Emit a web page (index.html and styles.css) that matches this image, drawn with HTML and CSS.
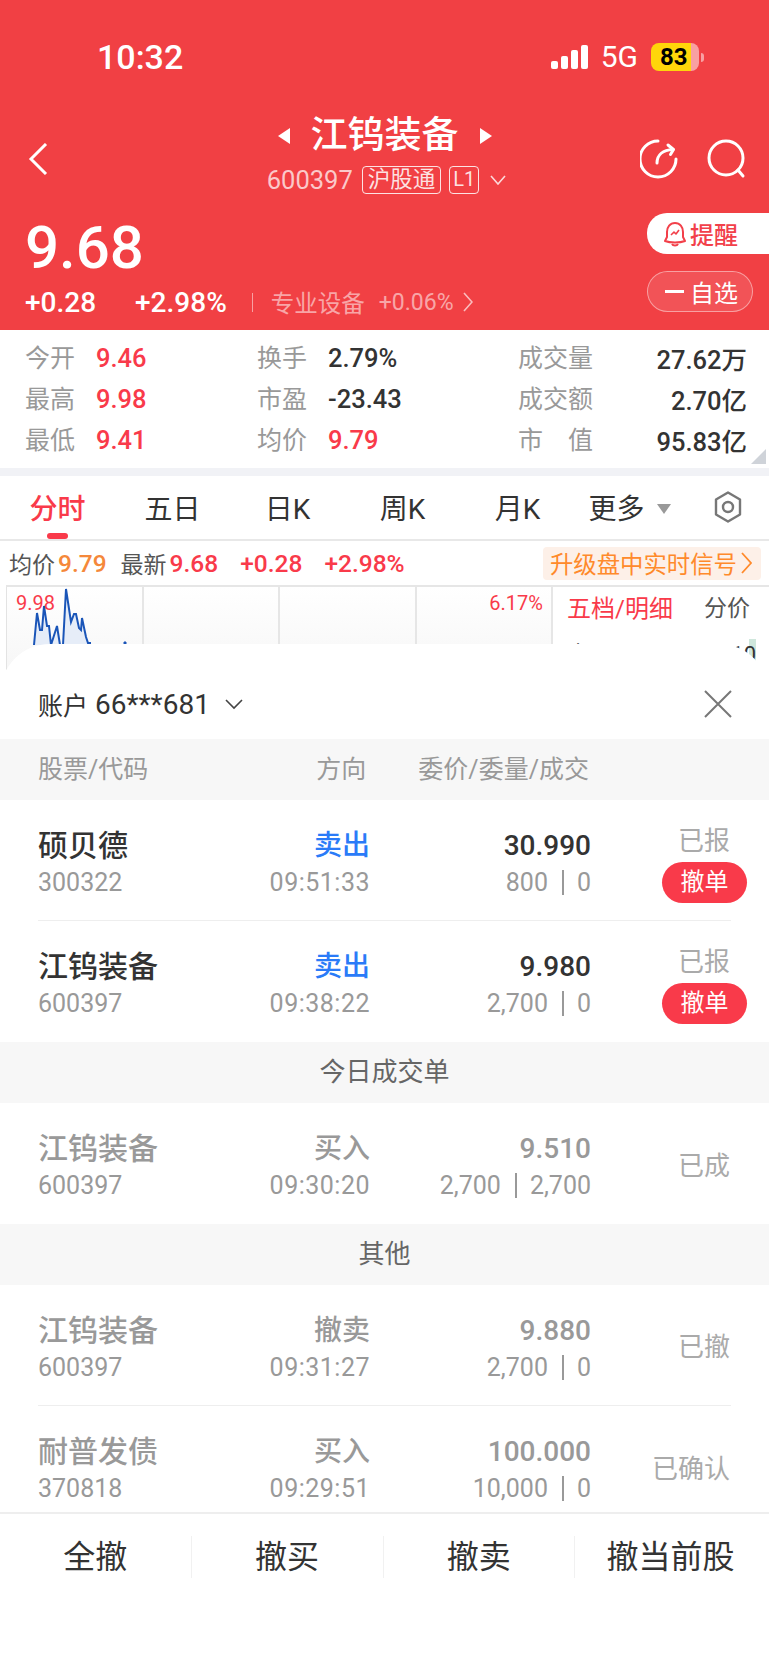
FILE: index.html
```html
<!DOCTYPE html>
<html lang="zh-CN">
<head>
  <meta charset="UTF-8" />
  <meta name="viewport" content="width=device-width, initial-scale=1.0" />
  <title>江钨装备</title>
  <link rel="stylesheet" href="styles.css">
</head>
<body>
  <div class="app">
    <header class="header">
      <div class="status-bar">
        <span class="clock">10:32</span>
        <div class="status-right">
          <div class="signal"><i></i><i></i><i></i><i></i></div>
          <span class="net">5G</span>
          <div class="battery"><span>83</span></div>
          <i class="battery-cap"></i>
        </div>
      </div>

      <div class="nav">
        <svg class="back" width="20" height="32" viewBox="0 0 20 32"><path d="M18 1 3 16l15 15" fill="none" stroke="#fff" stroke-width="3"/></svg>
        <div class="nav-center">
          <div class="title-line">
            <i class="arrow-left"></i>
            <span class="title">江钨装备</span>
            <i class="arrow-right"></i>
          </div>
          <div class="code-line">
            <span class="code">600397</span>
            <span class="tag">沪股通</span>
            <span class="tag tag-l1">L1</span>
            <svg width="16" height="10" viewBox="0 0 16 10"><path d="M1 1l7 8 7-8" fill="none" stroke="#fff" stroke-opacity=".8" stroke-width="1.6"/></svg>
          </div>
        </div>
        <div class="nav-icons">
          <svg width="40" height="40" viewBox="0 0 40 40" fill="none" stroke="#fff" stroke-width="3" stroke-linecap="round" stroke-linejoin="round">
            <path d="M18 2A18 18 0 1 0 36 20"/>
            <path d="M17 24c0-8 6-13 16-13.500"/>
            <path d="M28 6l5.500 4.500-3 5"/>
          </svg>
          <svg width="40" height="40" viewBox="0 0 40 40" fill="none" stroke="#fff" stroke-width="3" stroke-linecap="round">
            <circle cx="19" cy="19" r="17"/>
            <path d="M31 31l5 6"/>
          </svg>
        </div>
      </div>

      <div class="price-row">
        <div class="price-left">
          <div class="price">9.68</div>
          <div class="change-line">
            <span class="chg">+0.28</span>
            <span class="chg-pct">+2.98%</span>
            <i class="sep"></i>
            <span class="sector">专业设备</span>
            <span class="sector-pct">+0.06%</span>
            <svg width="10" height="20" viewBox="0 0 10 20"><path d="M1 1l8 9-8 9" fill="none" stroke="#fff" stroke-opacity=".65" stroke-width="1.6"/></svg>
          </div>
        </div>
        <div class="price-actions">
          <div class="remind">
            <svg width="24" height="26" viewBox="0 0 24 26" fill="none" stroke="#f2404a" stroke-width="2" stroke-linejoin="round">
              <path d="M12 2c-5 0-8 4-8 9v5l-2 4c5 2 15 2 20 0l-2-4v-5c0-5-3-9-8-9z"/>
              <path d="M8 14l3-3 2 2 3-4" stroke-width="1.600"/>
              <path d="M9 23c1 2 5 2 6 0"/>
            </svg>
            <span>提醒</span>
          </div>
          <div class="watch"><i></i><span>自选</span></div>
        </div>
      </div>
    </header>

    <section class="stats">
      <div class="stat"><span class="stat-label">今开</span><span class="up">9.46</span></div>
      <div class="stat"><span class="stat-label">换手</span><span>2.79%</span></div>
      <div class="stat stat-wide"><span class="stat-label">成交量</span><span>27.62万</span></div>
      <div class="stat"><span class="stat-label">最高</span><span class="up">9.98</span></div>
      <div class="stat"><span class="stat-label">市盈</span><span>-23.43</span></div>
      <div class="stat stat-wide"><span class="stat-label">成交额</span><span>2.70亿</span></div>
      <div class="stat"><span class="stat-label">最低</span><span class="up">9.41</span></div>
      <div class="stat"><span class="stat-label">均价</span><span class="up">9.79</span></div>
      <div class="stat stat-wide"><span class="stat-label stat-spread"><b>市</b><b>值</b></span><span>95.83亿</span></div>
      <i class="corner"></i>
    </section>

    <nav class="tabs">
      <a class="tab active">分时</a>
      <a class="tab">五日</a>
      <a class="tab">日K</a>
      <a class="tab">周K</a>
      <a class="tab">月K</a>
      <a class="tab tab-more">更多<i></i></a>
      <svg class="tab-gear" width="30" height="32" viewBox="0 0 30 32" fill="none" stroke="#777" stroke-width="2.400" stroke-linejoin="round">
        <path d="M15 1.500l12 7v15l-12 7-12-7v-15z"/>
        <circle cx="15" cy="16" r="5"/>
      </svg>
    </nav>

    <div class="quote-line">
      <span class="muted">均价</span><span class="avg">9.79</span>
      <span class="muted latest">最新</span><span class="up">9.68</span>
      <span class="up gap-a">+0.28</span>
      <span class="up gap-b">+2.98%</span>
      <span class="signal-link">升级盘中实时信号
        <svg width="11" height="22" viewBox="0 0 11 22"><path d="M1 1l9 10-9 10" fill="none" stroke="#ff8a2b" stroke-width="1.800"/></svg>
      </span>
    </div>

    <div class="chart">
      <div class="plot">
        <div class="plot-cell">
          <span class="plot-high">9.98</span>
          <svg class="plot-line" width="137" height="60" viewBox="0 0 137 60">
            <path d="M27 60 30 28 33 45 35 45 37 21 40 41 42 41 44 60 50 41 53 60 56 60 59 4 64 37 67 29 69 29 72 43 74 45 75 33 79 52 81 58 84 58 84 60z" fill="#e6edf8"/>
            <path d="M27 60 30 28 33 45 35 45 37 21 40 41 42 41 44 60 50 41 53 60 56 60 59 4 64 37 67 29 69 29 72 43 74 45 75 33 79 52 81 58 84 58" fill="none" stroke="#1a55b8" stroke-width="2"/>
            <path d="M118 60 116 58 118 56 120 58z" fill="#1a55b8"/>
          </svg>
        </div>
        <div class="plot-cell"></div>
        <div class="plot-cell"></div>
        <div class="plot-cell plot-last"><span class="plot-pct">6.17%</span></div>
      </div>
      <div class="depth">
        <div class="depth-head"><span class="up">五档/明细</span><span class="depth-alt">分价</span></div>
        <i class="depth-bar"></i>
        <div class="depth-row"><span>卖5</span><span>10</span></div>
      </div>
    </div>

    <!-- orders sheet, slides over the chart -->
    <div class="sheet">
      <div class="sheet-top">
        <div class="account"><span>账户</span><span class="account-no">66***681</span>
          <svg width="18" height="11" viewBox="0 0 18 11"><path d="M1 1l8 8 8-8" fill="none" stroke="#444" stroke-width="1.600"/></svg>
        </div>
        <svg width="30" height="30" viewBox="0 0 30 30"><path d="M2 2l26 26M28 2 2 28" fill="none" stroke="#777" stroke-width="2"/></svg>
      </div>

      <div class="band band-head">
        <span>股票/代码</span>
        <span class="band-dir">方向</span>
        <span class="band-price">委价/委量/成交</span>
      </div>

      <div class="orders">
        <div class="row">
          <div><div class="name">硕贝德</div><div class="sub">300322</div></div>
          <div class="right"><div class="dir sell">卖出</div><div class="sub time">09:51:33</div></div>
          <div class="right"><div class="deal">30.990</div><div class="sub">800<i class="bar"></i>0</div></div>
          <div class="state state-open"><span>已报</span><a class="cancel">撤单</a></div>
        </div>
        <div class="row row-last">
          <div><div class="name">江钨装备</div><div class="sub">600397</div></div>
          <div class="right"><div class="dir sell">卖出</div><div class="sub time">09:38:22</div></div>
          <div class="right"><div class="deal">9.980</div><div class="sub">2,700<i class="bar"></i>0</div></div>
          <div class="state state-open"><span>已报</span><a class="cancel">撤单</a></div>
        </div>

        <div class="band band-title">今日成交单</div>

        <div class="row row-last row-done">
          <div><div class="name">江钨装备</div><div class="sub">600397</div></div>
          <div class="right"><div class="dir">买入</div><div class="sub time">09:30:20</div></div>
          <div class="right"><div class="deal">9.510</div><div class="sub">2,700<i class="bar"></i>2,700</div></div>
          <div class="state"><span>已成</span></div>
        </div>

        <div class="band band-title">其他</div>

        <div class="row row-done">
          <div><div class="name">江钨装备</div><div class="sub">600397</div></div>
          <div class="right"><div class="dir">撤卖</div><div class="sub time">09:31:27</div></div>
          <div class="right"><div class="deal">9.880</div><div class="sub">2,700<i class="bar"></i>0</div></div>
          <div class="state"><span>已撤</span></div>
        </div>
        <div class="row row-last row-done">
          <div><div class="name">耐普发债</div><div class="sub">370818</div></div>
          <div class="right"><div class="dir">买入</div><div class="sub time">09:29:51</div></div>
          <div class="right"><div class="deal">100.000</div><div class="sub">10,000<i class="bar"></i>0</div></div>
          <div class="state"><span>已确认</span></div>
        </div>
      </div>

      <div class="actions">
        <a>全撤</a>
        <a>撤买</a>
        <a>撤卖</a>
        <a>撤当前股</a>
      </div>
    </div>
  </div>
</body>
</html>
```

FILE: styles.css
```css
:root {
  --red: #f14044;
  --up: #f93a4a;
  --blue: #2a7bf8;
  --gray: #999;
  --band: #f7f7f7;
  --line: #eeeeee;
}

* {
  box-sizing: border-box;
}

body {
  margin: 0;
  background: #fff;
  font-family: Roboto, "Noto Sans CJK SC", sans-serif;
  color: #333;
}

i {
  display: block;
  font-style: normal;
}

.app {
  position: relative;
  width: 769px;
  height: 1665px;
  overflow: hidden;
}

.up { color: var(--up); }

/* red quote header */
.header {
  height: 330px;
  background: var(--red);
  color: #fff;
}

.status-bar {
  display: flex;
  justify-content: space-between;
  align-items: center;
  height: 114px;
  padding: 0 65px 0 97px;
}

.clock {
  font-size: 34px;
  font-weight: 500;
  line-height: 36px;
}

.status-right {
  display: flex;
  align-items: center;
}

.signal {
  display: flex;
  align-items: flex-end;
  gap: 3px;
  height: 24px;
  margin-right: 13px;
}

.signal i {
  width: 7px;
  border-radius: 2px;
  background: #fff;
}
.signal i:nth-child(1) { height: 8px; }
.signal i:nth-child(2) { height: 13px; }
.signal i:nth-child(3) { height: 19px; }
.signal i:nth-child(4) { height: 24px; }

.net {
  font-size: 30px;
  line-height: 30px;
  margin-right: 13px;
}

.battery {
  width: 48px;
  height: 28px;
  border-radius: 8px;
  background: linear-gradient(90deg, #ffd60a 83%, #f8a0a2 83%);
  color: #000;
  font-size: 24px;
  font-weight: 700;
  line-height: 28px;
  padding-left: 9px;
}

.battery-cap {
  width: 3px;
  height: 9px;
  margin-left: 2px;
  border-radius: 0 3px 3px 0;
  background: #f8a0a2;
}

.nav {
  position: relative;
  display: flex;
  justify-content: center;
  height: 90px;
}

.back {
  position: absolute;
  left: 28px;
  top: 29px;
}

.nav-icons {
  position: absolute;
  right: 22px;
  top: 25px;
  display: flex;
  gap: 27px;
}

.nav-center {
  display: flex;
  flex-direction: column;
  align-items: center;
}

.title-line {
  display: flex;
  align-items: center;
  gap: 21px;
  height: 44px;
}

.title {
  font-size: 37px;
  font-weight: 500;
  line-height: 44px;
}

.arrow-left,
.arrow-right {
  width: 0;
  height: 0;
  border-top: 8px solid transparent;
  border-bottom: 8px solid transparent;
}
.arrow-left { border-right: 12px solid #fff; }
.arrow-right { border-left: 12px solid #fff; }

.code-line {
  display: flex;
  align-items: center;
  gap: 8px;
  margin-top: 7px;
  padding-left: 4px;
  height: 30px;
}

.code {
  font-size: 25.500px;
  color: rgba(255, 255, 255, 0.72);
  margin-right: 1px;
}

.tag {
  height: 28px;
  padding: 0 5px;
  border: 1px solid rgba(255, 255, 255, 0.85);
  border-radius: 4px;
  font-size: 22.500px;
  line-height: 25px;
  color: rgba(255, 255, 255, 0.85);
}

.tag-l1 {
  padding: 0 3px;
  font-size: 20px;
  margin-right: 3px;
}

.price-row {
  display: flex;
  justify-content: space-between;
  padding: 9px 16px 0 25px;
}

.price {
  font-size: 60px;
  font-weight: 500;
  line-height: 70px;
  letter-spacing: 0;
}

.change-line {
  display: flex;
  align-items: center;
  height: 36px;
  margin-top: 1px;
}

.chg,
.chg-pct {
  font-size: 28px;
  font-weight: 500;
}

.chg-pct {
  margin-left: 39px;
}

.sep {
  width: 1px;
  height: 19px;
  margin: 0 18px 0 25px;
  background: rgba(255, 255, 255, 0.5);
}

.sector {
  font-size: 23.500px;
  color: rgba(255, 255, 255, 0.55);
}

.sector-pct {
  margin: 0 9px 0 14px;
  font-size: 23px;
  color: rgba(255, 255, 255, 0.55);
}

.price-actions {
  display: flex;
  flex-direction: column;
  gap: 17px;
}

.remind {
  display: flex;
  align-items: center;
  gap: 3px;
  width: 122px;
  height: 41px;
  margin-right: -16px;
  padding-left: 16px;
  border-radius: 20px 0 0 20px;
  background: #fff;
  color: #f2404a;
  font-size: 24px;
  font-weight: 500;
}

.watch {
  display: flex;
  align-items: center;
  gap: 6px;
  width: 106px;
  height: 41px;
  padding-left: 17px;
  border: 1px solid rgba(255, 255, 255, 0.45);
  border-radius: 21px;
  background: rgba(255, 255, 255, 0.1);
  font-size: 24px;
}

.watch i {
  width: 19px;
  height: 3px;
  background: #fff;
}

/* open, high, low and friends */
.stats {
  position: relative;
  display: grid;
  grid-template-columns: 232px 261px 1fr;
  grid-auto-rows: 41px;
  height: 146px;
  padding: 7px 22px 0 25px;
  border-bottom: 8px solid #f1f2f6;
  font-size: 25.500px;
  font-weight: 500;
}

.stat {
  display: flex;
  align-items: center;
}

.stat-label {
  flex: none;
  width: 71px;
  margin-bottom: 3px;
  font-weight: 400;
  font-size: 25px;
  color: var(--gray);
  white-space: nowrap;
}

.stat-wide {
  justify-content: space-between;
}

.stat-spread {
  display: flex;
  justify-content: space-between;
  width: 75px;
}

.stat-spread b {
  font-weight: 400;
}

.corner {
  position: absolute;
  right: 3px;
  bottom: 4px;
  width: 0;
  height: 0;
  border-left: 15px solid transparent;
  border-bottom: 15px solid #cfd3d9;
}

/* period tabs */
.tabs {
  position: relative;
  display: flex;
  height: 65px;
  border-bottom: 2px solid #e8e8e8;
}

.tab {
  position: relative;
  display: flex;
  align-items: center;
  justify-content: center;
  width: 115px;
  height: 62px;
  font-size: 28px;
  color: #333;
}

.tab.active {
  color: var(--up);
  font-weight: 500;
}

.tab.active::after {
  content: "";
  position: absolute;
  left: 47px;
  bottom: -1px;
  width: 21px;
  height: 6px;
  border-radius: 3px;
  background: var(--up);
}

.tab-more {
  padding-right: 6px;
}

.tab-more i {
  width: 0;
  height: 0;
  margin: 3px 0 0 12px;
  border-left: 7px solid transparent;
  border-right: 7px solid transparent;
  border-top: 10px solid #999;
}

.tab-gear {
  margin: 15px 0 0 23px;
}

.quote-line {
  display: flex;
  align-items: center;
  height: 44px;
  padding: 0 8px 0 9px;
  font-size: 24.500px;
  font-weight: 500;
}

.muted {
  margin-right: 3px;
  font-size: 23px;
  font-weight: 400;
  color: #555;
}

.avg { color: #f5883a; }
.latest { margin-left: 14px; }
.gap-a { margin-left: 22px; }
.gap-b { margin-left: 22px; }

.signal-link {
  display: flex;
  align-items: center;
  gap: 4px;
  margin-left: auto;
  height: 33px;
  padding: 0 9px 0 7px;
  border-radius: 4px;
  background: #fdf0e8;
  color: #ff8a2b;
  font-size: 23.400px;
  font-weight: 400;
}

/* intraday chart, mostly under the sheet */
.chart {
  display: flex;
  height: 120px;
  margin-left: 6px;
  border-top: 2px solid #e6e6e6;
  background: linear-gradient(#fff, #f3f3f3);
}

.plot {
  display: flex;
  width: 547px;
  border-left: 1px solid #e3e3e3;
}

.plot-cell {
  position: relative;
  flex: 1;
  border-right: 2px solid #e6e6e6;
}

.plot-high,
.plot-pct {
  position: absolute;
  top: 4px;
  font-size: 20px;
  line-height: 24px;
  color: var(--up);
  z-index: 1;
}

.plot-high { left: 9px; }
.plot-pct { right: 8px; }

.plot-line {
  position: absolute;
  left: 0;
  top: -2px;
}

.depth {
  position: relative;
  flex: 1;
  background: #fff;
}

.depth-head {
  display: flex;
  justify-content: space-between;
  padding: 5px 19px 0 14px;
  font-size: 24px;
  line-height: 34px;
}

.depth-alt {
  font-size: 23px;
  color: #555;
}

.depth-row {
  position: relative;
  display: flex;
  justify-content: space-between;
  margin-top: 14px;
  padding: 0 13px 0 14px;
  font-size: 22px;
  line-height: 30px;
  color: #333;
}

.depth-bar {
  position: absolute;
  right: 13px;
  top: 52px;
  width: 7px;
  height: 40px;
  background: #cfe7dc;
}

/* pending orders sheet */
.sheet {
  position: absolute;
  left: 0;
  right: 0;
  top: 644px;
  bottom: 0;
  z-index: 2;
  display: flex;
  flex-direction: column;
  border-radius: 50px 50px 0 0;
  background: #fff;
}

.sheet-top {
  display: flex;
  align-items: center;
  justify-content: space-between;
  height: 95px;
  padding: 25px 36px 0 38px;
}

.account {
  display: flex;
  align-items: center;
  font-size: 25px;
  color: #333;
}

.account-no {
  margin: 0 15px 0 7px;
  font-size: 28px;
}

.band {
  height: 61px;
  background: var(--band);
  font-size: 25px;
  line-height: 61px;
}

.band-head {
  display: flex;
  padding-left: 38px;
  color: var(--gray);
}

.band-dir {
  width: 115px;
  margin-left: 103px;
  text-align: right;
}

.band-price {
  margin-left: 52px;
}

.band-title {
  text-align: center;
  font-size: 26px;
  color: #666;
}

.orders {
  flex: 1;
  overflow: hidden;
}

.row {
  display: grid;
  grid-template-columns: 190px 142px 221px 139px;
  height: 121px;
  margin: 0 38px;
  padding-top: 27px;
  border-bottom: 1px solid var(--line);
}

.row-last {
  border-bottom: 0;
}

.right {
  text-align: right;
}

.name,
.dir,
.deal {
  font-size: 28px;
  line-height: 38px;
}

.name { font-size: 30px; color: #333; font-weight: 500; }
.dir { font-weight: 500; }
.sell { color: var(--blue); }
.deal { font-weight: 500; color: #333; }

.sub {
  font-size: 25px;
  line-height: 36px;
  color: var(--gray);
}

.time {
  letter-spacing: 0.5px;
}

.bar {
  display: inline-block;
  width: 2px;
  height: 25px;
  margin: 0 13px 0 14px;
  vertical-align: -4px;
  background: #999;
}

.state {
  display: flex;
  flex-direction: column;
  align-items: flex-end;
  justify-content: center;
  margin-top: -28px;
  font-size: 26px;
  color: #aaa;
}

.state-open {
  justify-content: flex-start;
  margin-top: -5px;
}

.state-open span {
  line-height: 38px;
}

.cancel {
  display: block;
  width: 85px;
  height: 41px;
  margin: 2px -17px 0 0;
  border-radius: 21px;
  background: var(--up);
  color: #fff;
  font-size: 24px;
  line-height: 41px;
  text-align: center;
}

.row-done .name,
.row-done .dir,
.row-done .deal {
  color: var(--gray);
}

.actions {
  flex: none;
  display: flex;
  height: 153px;
  padding-top: 22px;
  align-items: flex-start;
  border-top: 2px solid var(--line);
  background: #fff;
}

.actions a {
  flex: 1;
  height: 42px;
  border-right: 1px solid #f1f1f1;
  font-size: 32px;
  line-height: 42px;
  text-align: center;
  color: #333;
}

.actions a:last-child {
  padding-right: 3px;
  border-right: 0;
}
```
